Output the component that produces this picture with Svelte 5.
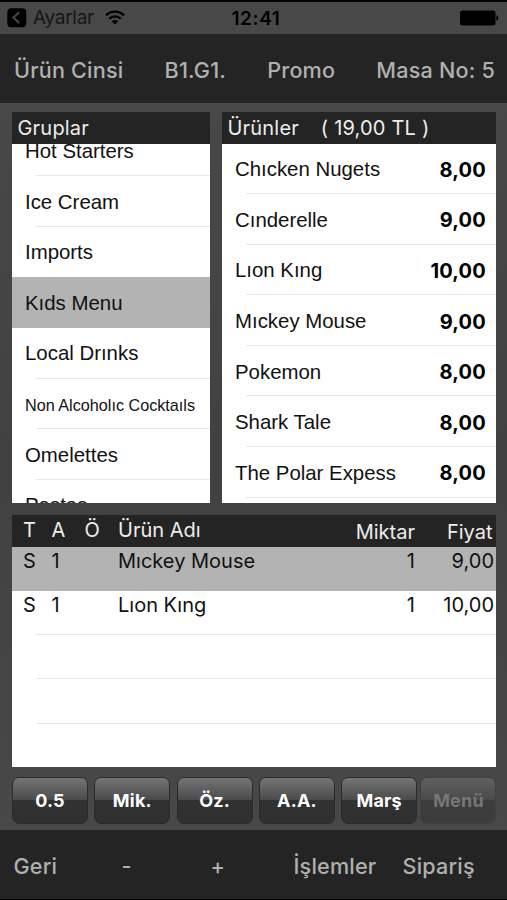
<script lang="ts">
type Order = { t: string; a: number; name: string; qty: number; price: string };

const navItems = ["Ürün Cinsi", "B1.G1.", "Promo", "Masa No: 5"];

const groups = [
  "Hot Starters",
  "Ice Cream",
  "Imports",
  "Kıds Menu",
  "Local Drınks",
  "Non Alcoholıc Cocktaıls",
  "Omelettes",
  "Pastas",
];

const products = [
  { name: "Chıcken Nugets", price: "8,00" },
  { name: "Cınderelle", price: "9,00" },
  { name: "Lıon Kıng", price: "10,00" },
  { name: "Mıckey Mouse", price: "9,00" },
  { name: "Pokemon", price: "8,00" },
  { name: "Shark Tale", price: "8,00" },
  { name: "The Polar Expess", price: "8,00" },
];

const orders: Order[] = [
  { t: "S", a: 1, name: "Mıckey Mouse", qty: 1, price: "9,00" },
  { t: "S", a: 1, name: "Lıon Kıng", qty: 1, price: "10,00" },
];

const actions = ["0.5", "Mik.", "Öz.", "A.A.", "Marş", "Menü"];

let selectedGroup = $state("Kıds Menu");
let selectedOrder = $state(0);
</script>

<div class="screen">
  <header class="status">
    <div class="back-app">
      <svg width="20" height="20" viewBox="0 0 20 20">
        <rect width="19" height="19" x="0.3" y="0.3" rx="4" fill="#000" />
        <path d="M12.2 4.3 6.4 9.6l5.8 5.3" fill="none" stroke="#484848" stroke-width="2" />
      </svg>
      <span>Ayarlar</span>
      <svg class="wifi" width="20" height="15" viewBox="0 0 20 15">
        <g fill="none" stroke="#000" stroke-width="2.2">
          <path d="M1 5.4a12.7 12.7 0 0 1 18 0" />
          <path d="M4.2 8.8a8.2 8.2 0 0 1 11.6 0" />
        </g>
        <path d="M6.8 11.3a4.5 4.5 0 0 1 6.4 0L10 14.5z" />
      </svg>
    </div>
    <span class="clock">12:41</span>
    <svg class="battery" width="39" height="16" viewBox="0 0 39 16">
      <rect width="35.5" height="15" y="0.5" rx="2.5" />
      <path d="M36.4 5.2c2.6.8 2.6 4.8 0 5.6z" />
    </svg>
  </header>

  <nav class="navbar">
    {#each navItems as item}
      <button class="bar-btn">{item}</button>
    {/each}
  </nav>

  <main>
    <div class="lists">
      <section class="panel groups">
        <h2>Gruplar</h2>
        <ul>
          {#each groups as group}
            <li class:selected={group === selectedGroup}>
              <button class:small={group.length > 20} onclick={() => (selectedGroup = group)}>{group}</button>
            </li>
          {/each}
        </ul>
      </section>

      <section class="panel products">
        <h2>Ürünler <span>( 19,00 TL )</span></h2>
        <ul>
          {#each products as product}
            <li>
              <button>{product.name}</button>
              <strong>{product.price}</strong>
            </li>
          {/each}
        </ul>
      </section>
    </div>

    <section class="panel orders">
      <div class="order-row head">
        <span>T</span><span>A</span><span>Ö</span><span>Ürün Adı</span>
        <span class="num">Miktar</span><span class="num">Fiyat</span>
      </div>
      {#each orders as order, i}
        <!-- svelte-ignore a11y_click_events_have_key_events, a11y_no_static_element_interactions -->
        <div class="order-row" class:selected={i === selectedOrder} onclick={() => (selectedOrder = i)}>
          <span>{order.t}</span><span>{order.a}</span><span></span><span>{order.name}</span>
          <span class="num">{order.qty}</span><span class="num">{order.price}</span>
        </div>
      {/each}
      <div class="order-row"></div>
      <div class="order-row"></div>
    </section>

    <div class="actions">
      {#each actions as action}
        <button disabled={action === "Menü"}>{action}</button>
      {/each}
    </div>
  </main>

  <footer class="toolbar">
    <button class="bar-btn">Geri</button>
    <button class="bar-btn">-</button>
    <button class="bar-btn">+</button>
    <button class="bar-btn">İşlemler</button>
    <button class="bar-btn">Sipariş</button>
  </footer>
</div>

<style>
:global(body) {
  background: #000;
}

.screen {
  display: flex;
  flex-direction: column;
  box-sizing: border-box;
  width: 507px;
  height: 900px;
  padding: 2px 0 1px;
  overflow: hidden;
  background: #000;
  font-family: Inter, "Liberation Sans", sans-serif;
  color: #111;
}

button {
  appearance: none;
  border: none;
  background: none;
  padding: 0;
  margin: 0;
  font: inherit;
  color: inherit;
  letter-spacing: inherit;
  white-space: nowrap;
}

.status {
  display: grid;
  grid-template-columns: 1fr auto 1fr;
  align-items: center;
  height: 31.5px;
  padding: 0 8px 0 7px;
  background: #484848;
  color: #000;
  font-size: 19px;
}
.back-app {
  display: flex;
  align-items: center;
  color: #161616;
}
.back-app span {
  margin-left: 6px;
  letter-spacing: -0.3px;
}
.wifi {
  margin-left: 11px;
}
.clock {
  padding: 1px 0 0 6px;
  font-weight: 600;
  letter-spacing: 0.6px;
}
.battery {
  justify-self: end;
}

.navbar {
  display: flex;
  flex: none;
  justify-content: space-between;
  align-items: center;
  height: 69px;
  padding: 4px 12px 0 14px;
  box-sizing: border-box;
  background: #242424;
}
.bar-btn {
  color: #b0b0b0;
  font-size: 21.6px;
  font-weight: 550;
  letter-spacing: 0.2px;
}

main {
  display: flex;
  flex-direction: column;
  flex: 1;
  padding: 9.5px 11px 0 12px;
  background: linear-gradient(#484848, #414141 50%, #484848);
}

.lists {
  display: grid;
  grid-template-columns: 198px 274px;
  gap: 12px;
  height: 390.5px;
}

.panel {
  display: flex;
  flex-direction: column;
  overflow: hidden;
  background: #fff;
}
.panel h2 {
  flex: none;
  height: 31.5px;
  margin: 0;
  padding-left: 5.5px;
  background: #242424;
  color: #ededed;
  font-size: 20px;
  font-weight: 400;
  letter-spacing: 0.2px;
  line-height: 33px;
}
.panel h2 span {
  margin-left: 16px;
}

ul {
  flex: 1;
  min-height: 0;
  margin: 0;
  padding: 0;
  overflow: hidden;
  list-style: none;
  font-family: "Liberation Sans", Arial, sans-serif;
  font-size: 20.4px;
}
li {
  display: flex;
  position: relative;
  justify-content: space-between;
  align-items: center;
  box-sizing: border-box;
  height: 50.6px;
  padding: 1px 10px 0 13px;
}
/* inset hairline under each row */
li::after,
.order-row::after {
  content: "";
  position: absolute;
  right: 0;
  bottom: 0;
  left: 24px;
  height: 1px;
  background: #e6e6e6;
}
.selected {
  background: #b3b3b3;
}
.selected::after {
  display: none;
}
li:has(+ .selected)::after {
  display: none;
}

/* the group list is scrolled part of a row */
.groups li:first-child {
  margin-top: -17.8px;
}
.groups .small {
  padding-top: 2px;
  font-size: 16.2px;
}
.products li {
  padding-top: 2px;
}
.products strong {
  font-family: Inter, sans-serif;
  font-size: 20px;
  font-weight: 700;
  letter-spacing: 0.2px;
  color: #000;
}

.orders {
  height: 252px;
  margin-top: 12.5px;
}
.order-row {
  display: grid;
  flex: none;
  position: relative;
  grid-template-columns: 28.5px 33px 33.5px 200px 97px 79px;
  box-sizing: border-box;
  height: 44.3px;
  padding-left: 11px;
  font-size: 20px;
  line-height: 28px;
}
.order-row.head {
  height: 31.5px;
  background: #242424;
  color: #ededed;
  line-height: 30px;
}
.order-row.head::after {
  display: none;
}
.num {
  text-align: right;
}
.head .num {
  line-height: 34px;
}
.head .num:last-child {
  padding-right: 1.5px;
}

.actions {
  display: grid;
  grid-template-columns: repeat(6, 76px);
  gap: 6.3px;
  margin-top: 10px;
}
.actions button {
  height: 46.5px;
  border: 1px solid #2b2b2b;
  border-radius: 7px;
  background: linear-gradient(#757575, #4a4a4a 49%, #313131 50%, #303030);
  color: #fff;
  font-size: 18px;
  font-weight: 700;
  letter-spacing: 0.2px;
}
.actions button:last-child {
  margin: 0 3px 0 -3px;
}
.actions button:disabled {
  border-color: #404040;
  background: linear-gradient(#606060, #4a4a4a 49%, #3d3d3d 50%, #3c3c3c);
  color: #777;
}

.toolbar {
  display: grid;
  flex: none;
  grid-template-columns: 108px 89px 83px 109px auto;
  align-items: center;
  justify-items: start;
  box-sizing: border-box;
  height: 69px;
  padding: 3px 0 0 13.5px;
  background: #242424;
}
</style>
